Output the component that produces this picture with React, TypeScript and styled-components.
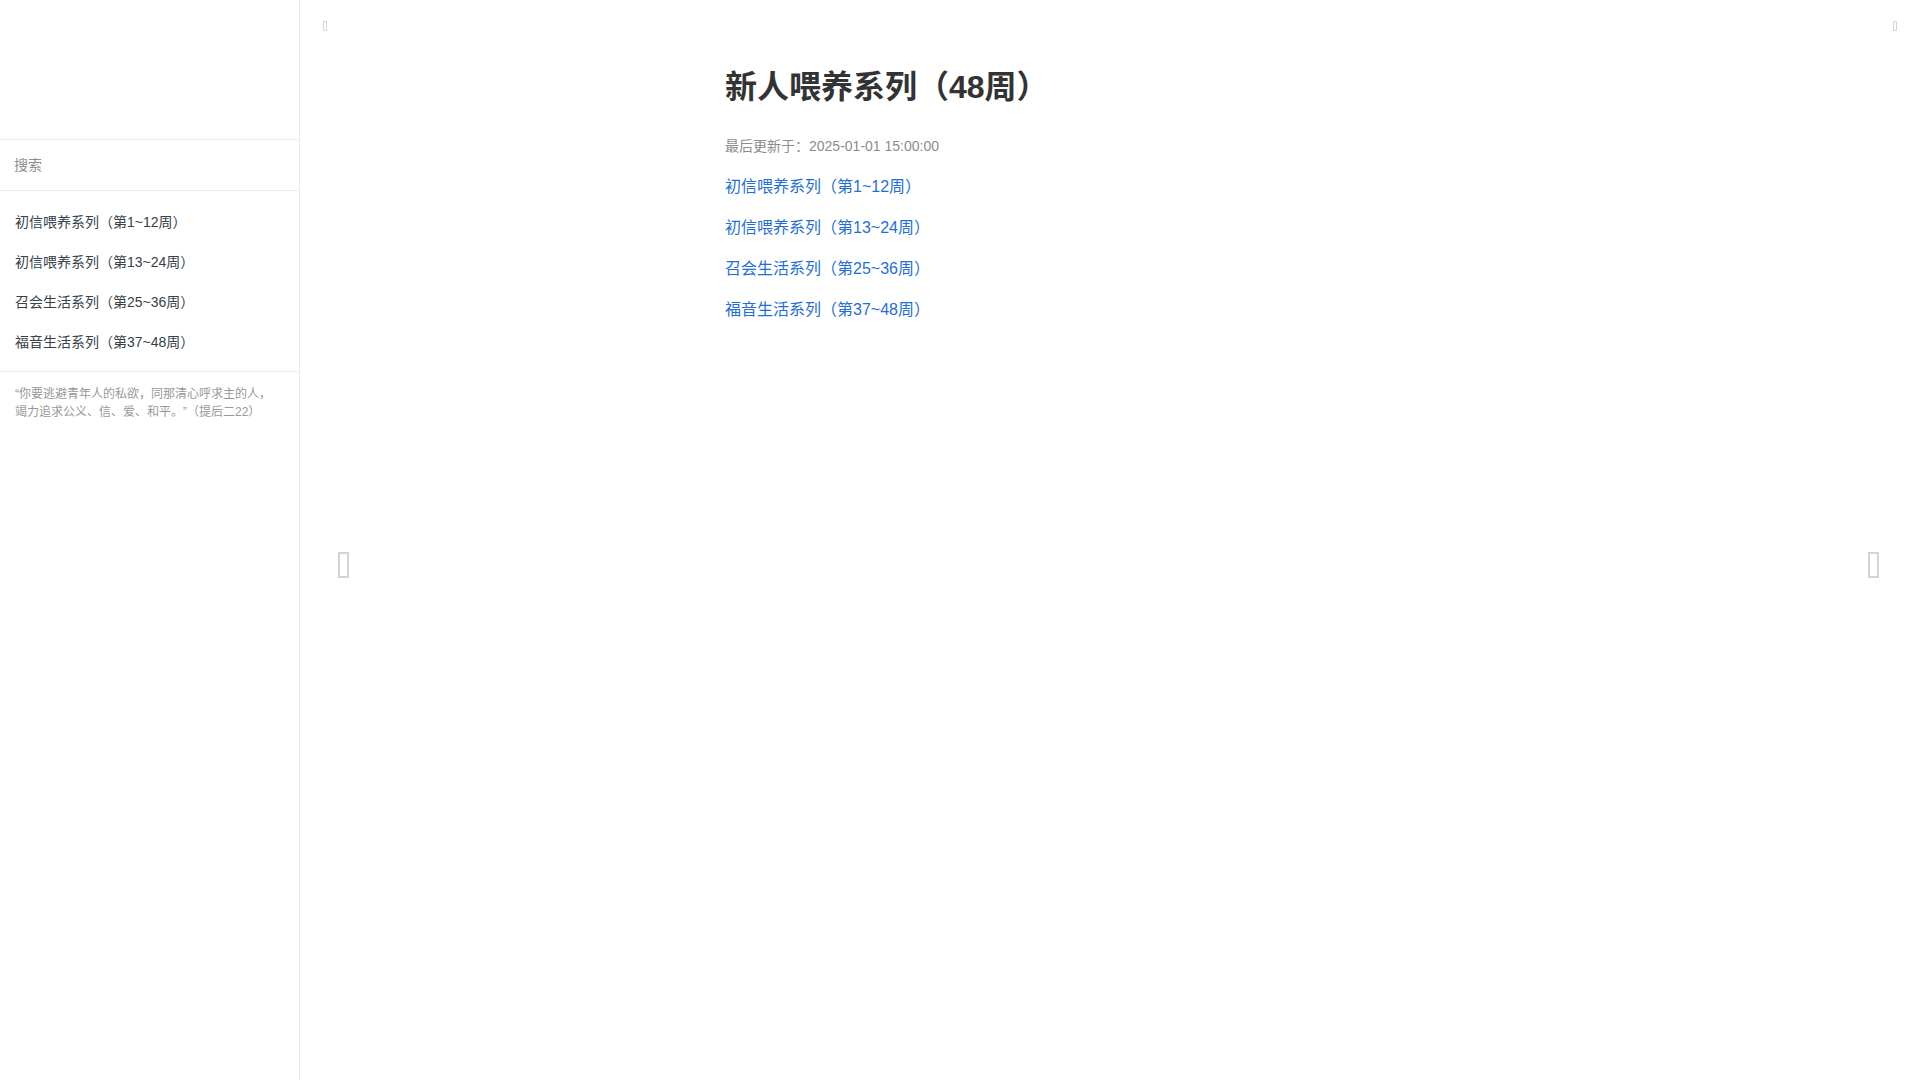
import React from "react";
import styled, { createGlobalStyle } from "styled-components";

const GlobalStyle = createGlobalStyle`
  html, body {
    margin: 0;
    padding: 0;
    background: #ffffff;
  }
  body {
    font-family: "Liberation Sans", "Noto Sans CJK SC", sans-serif;
    color: #333333;
    text-spacing-trim: space-all;
  }
`;

const Book = styled("div")`
  display: flex;
  width: 100%;
  height: 1080px;
  overflow: hidden;
`;

const Summary = styled("aside")`
  width: 300px;
  flex-shrink: 0;
  height: 100%;
  box-sizing: border-box;
  border-right: 1px solid #ebebeb;
  display: flex;
  flex-direction: column;
  background: #ffffff;
`;

const LogoArea = styled("div")`
  height: 139px;
`;

const SearchBox = styled("div")`
  height: 52px;
  box-sizing: border-box;
  border-top: 1px solid #ebebeb;
  border-bottom: 1px solid #ebebeb;
  display: flex;
  align-items: center;
`;

const SearchInput = styled("input")`
  width: 100%;
  border: none;
  outline: none;
  background: transparent;
  padding: 0 14px;
  font-family: inherit;
  font-size: 14px;
  color: #333333;

  &::placeholder {
    color: #8c8c8c;
  }
`;

const NavList = styled("ul")`
  list-style: none;
  margin: 0;
  padding: 10px 0;
  border-bottom: 1px solid #ebebeb;
`;

const NavItem = styled("li")`
  height: 40px;
  display: flex;
  align-items: center;
  padding: 0 15px;
  font-size: 14px;
  color: #364149;
  cursor: pointer;
`;

const Quote = styled("div")`
  padding: 13px 15px;
  font-size: 12px;
  line-height: 18px;
  color: #999999;
`;

const Body = styled("main")`
  position: relative;
  flex: 1;
  height: 100%;
  display: flex;
  flex-direction: column;
`;

const Header = styled("header")`
  height: 50px;
  flex-shrink: 0;
  display: flex;
  align-items: center;
  justify-content: space-between;
  padding: 0 8px;
`;

const HeaderButton = styled("span")`
  padding: 2px 15px 0;
  display: flex;
  align-items: center;
  height: 50px;
  box-sizing: border-box;
`;

const Tofu = styled("span")<{ $big?: boolean }>`
  display: inline-block;
  box-sizing: border-box;
  width: ${(p) => (p.$big ? "11px" : "4px")};
  height: ${(p) => (p.$big ? "26px" : "10px")};
  border: ${(p) => (p.$big ? "2px" : "1px")} solid #d4d4d4;
`;

const Navigation = styled("a")<{ $side: "left" | "right" }>`
  position: absolute;
  top: 50px;
  bottom: 0;
  ${(p) => (p.$side === "left" ? "left: 0; width: 86px;" : "right: 0; width: 93px;")}
  display: flex;
  align-items: center;
  justify-content: center;
  cursor: pointer;
`;

const PageInner = styled("section")`
  width: 800px;
  box-sizing: border-box;
  margin: 0 auto;
  padding: 18px 15px 40px;
`;

const Title = styled("h1")`
  margin: 0 0 28px;
  font-size: 32px;
  line-height: 38px;
  font-weight: bold;
  color: #333333;
`;

const Updated = styled("p")`
  margin: 0 0 15px;
  font-size: 14px;
  line-height: 24px;
  color: #8c8c8c;
`;

const LinkLine = styled("p")`
  margin: 0 0 13.8px;
  font-size: 16px;
  line-height: 27.2px;
`;

const Link = styled("a")`
  color: #1f6fd8;
  text-decoration: none;
  cursor: pointer;
`;

const chapters = [
  "初信喂养系列（第1~12周）",
  "初信喂养系列（第13~24周）",
  "召会生活系列（第25~36周）",
  "福音生活系列（第37~48周）",
];

const App = () => {
  return (
    <>
      <GlobalStyle />
      <Book>
        <Summary>
          <LogoArea />
          <SearchBox>
            <SearchInput type="text" placeholder="搜索" />
          </SearchBox>
          <NavList>
            {chapters.map((c) => (
              <NavItem key={c}>{c}</NavItem>
            ))}
          </NavList>
          <Quote>
            “你要逃避青年人的私欲，同那清心呼求主的人，
            <br />
            竭力追求公义、信、爱、和平。”（提后二22）
          </Quote>
        </Summary>
        <Body>
          <Header>
            <HeaderButton>
              <Tofu />
            </HeaderButton>
            <HeaderButton>
              <Tofu />
            </HeaderButton>
          </Header>
          <PageInner>
            <Title>新人喂养系列（48周）</Title>
            <Updated>最后更新于：2025-01-01 15:00:00</Updated>
            {chapters.map((c) => (
              <LinkLine key={c}>
                <Link>{c}</Link>
              </LinkLine>
            ))}
          </PageInner>
          <Navigation $side="left">
            <Tofu $big />
          </Navigation>
          <Navigation $side="right">
            <Tofu $big />
          </Navigation>
        </Body>
      </Book>
    </>
  );
};

export default App;
